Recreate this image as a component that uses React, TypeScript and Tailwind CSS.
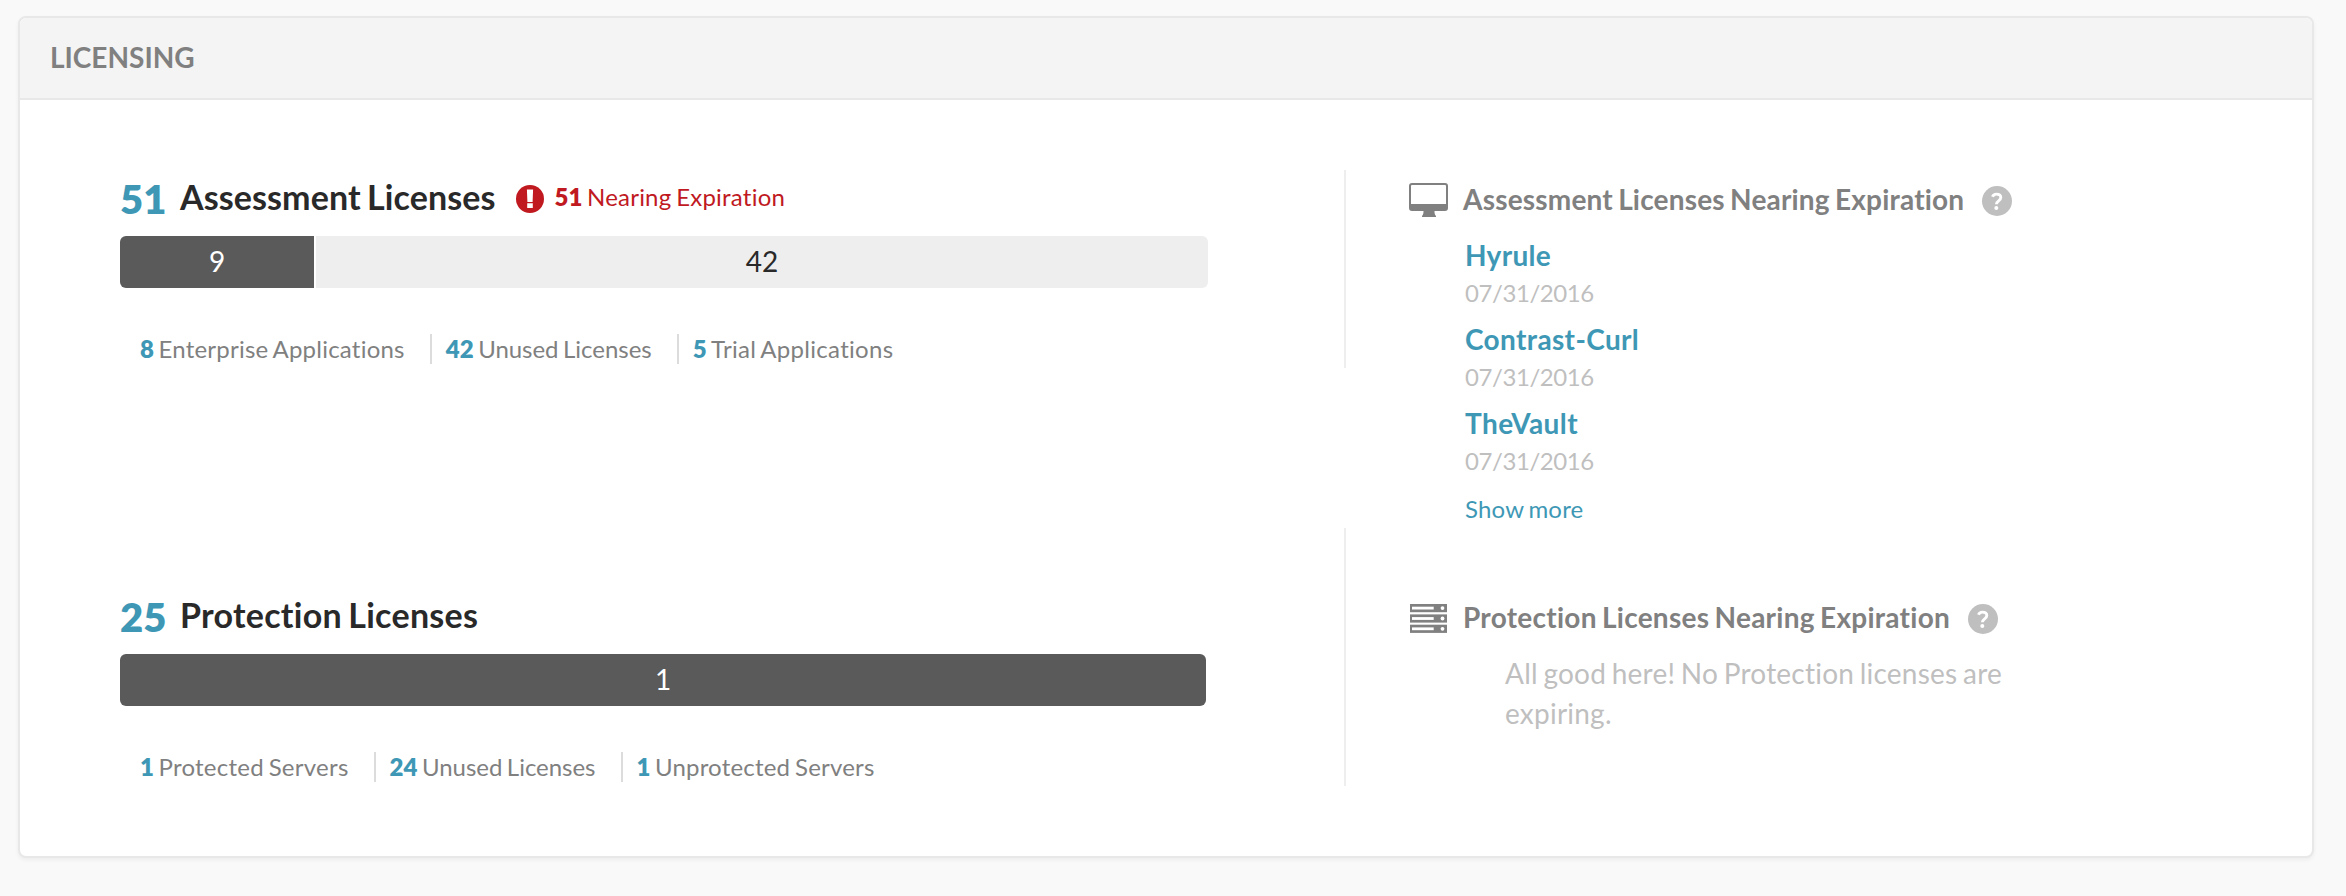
import { Fragment, type ReactNode } from "react";

const Help = () => (
  <svg viewBox="0 0 30 30" className="mt-0.5 size-[30px] shrink-0">
    <circle cx="15" cy="15" r="15" fill="#bfbfbf" />
    <path d="M10.500 10.700C11.200 8.700 12.700 8.100 14.400 8.100c2.500 0 4.400 1.300 4.400 3.400 0 3.300-4.400 3.300-4.400 6.700" fill="none" stroke="#fff" strokeWidth="2.900" />
    <circle cx="14.300" cy="21.900" r="2" fill="#fff" />
  </svg>
);

const Alert = () => (
  <svg viewBox="0 0 28 28" className="size-7 shrink-0">
    <circle cx="14" cy="14" r="14" fill="#c0191f" />
    <path d="M10.900 4.500h6.200l-.5 12.500h-5.200zM11.200 18.300h5.600v4.600h-5.600z" fill="#fff" />
  </svg>
);

const Monitor = () => (
  <svg viewBox="0 0 40 34" className="h-[34px] w-10">
    <path
      fillRule="evenodd"
      fill="#808080"
      d="M3 0h33a3 3 0 0 1 3 3v22a3 3 0 0 1-3 3H25.500c0 2.500.3 3.600 1.500 5v1H13v-1c1.200-1.400 1.500-2.500 1.500-5H3a3 3 0 0 1-3-3V3a3 3 0 0 1 3-3zM3 2a1 1 0 0 0-1 1v18h35V3a1 1 0 0 0-1-1z"
    />
  </svg>
);

const Servers = () => (
  <svg viewBox="0 0 37 29" className="ml-px h-[29px] w-[37px]">
    {[0, 10.4, 20.7].map((y) => (
      <g key={y}>
        <rect y={y} width="37" height="8.200" fill="#808080" />
        <rect x="2" y={y + 2.700} width="21.700" height="2.800" fill="#fff" />
        <circle cx="32.500" cy={y + 4.100} r="1.900" fill="#fff" />
      </g>
    ))}
  </svg>
);

type Stat = { value: number; label: string; tracking: string };

const Stats = ({ items }: { items: Stat[] }) => (
  <div className="mt-[46px] ml-5 flex h-[30px] items-center text-2xl leading-[30px] text-[#808080] [word-spacing:-1.6px]">
    {items.map((s, i) => (
      <Fragment key={s.label}>
        {i > 0 && <span className="mr-[13.5px] ml-[25.5px] h-[30px] w-0.5 bg-[#dcdcdc]" />}
        <span className="whitespace-nowrap">
          <b className="font-extrabold text-[#3e98b5]">{s.value}</b> <span className={s.tracking}>{s.label}</span>
        </span>
      </Fragment>
    ))}
  </div>
);

const Title = ({ count, tracking, children }: { count: number; tracking: string; children: ReactNode }) => (
  <div className="flex h-[50px] items-baseline pt-1">
    <span className="text-[40px] leading-[50px] font-extrabold text-[#3e98b5]">{count}</span>
    <h2 className={`relative -top-1 ml-[13.5px] text-[34px] leading-[50px] font-bold text-[#292929] [word-spacing:-2.2px] ${tracking}`}>{children}</h2>
  </div>
);

const SideTitle = ({ icon, tracking, children }: { icon: ReactNode; tracking: string; children: ReactNode }) => (
  <div className="flex h-10 items-center">
    <span className="flex w-[54px] items-center">{icon}</span>
    <h3 className={`mr-[18px] pb-0.5 text-[28px] leading-10 font-bold text-[#808080] [word-spacing:-1.8px] ${tracking}`}>{children}</h3>
    <Help />
  </div>
);

const apps = [
  { name: "Hyrule", tracking: "tracking-[0.3px]" },
  { name: "Contrast-Curl", tracking: "tracking-[0.36px]" },
  { name: "TheVault", tracking: "tracking-[0.4px]" },
];

export default function App() {
  return (
    <div className="h-[896px] w-[2346px] bg-[#f9f9f9] pt-4 pl-[18px] font-['Lato',sans-serif] [font-variant-ligatures:none]">
      <section className="h-[842px] w-[2296px] overflow-hidden rounded-lg border-2 border-[#e8e8e8] bg-white shadow-[0_2px_4px_rgba(0,0,0,0.05)]">
        <header className="flex h-[82px] items-center border-b-2 border-[#e8e8e8] bg-[#f4f4f4] pl-[30px]">
          <h1 className="pb-0.5 text-[28px] leading-10 font-bold text-[#808080]">LICENSING</h1>
        </header>

        <div className="flex h-[428px] pt-[70px] pl-[100px]">
          <div className="w-[1224px]">
            <div className="flex h-[66px] items-start">
              <Title count={51} tracking="tracking-[0.11px]">Assessment Licenses</Title>
              <div className="mt-[15px] ml-5 flex items-center text-2xl leading-7 text-[#c0191f] [word-spacing:-1.6px]">
                <Alert />
                <span className="-mt-1 ml-[11px]">
                  <b className="font-extrabold">51</b> <span className="tracking-[0.22px]">Nearing Expiration</span>
                </span>
              </div>
            </div>
            <div className="flex h-[52px] w-[1088px] gap-0.5 overflow-hidden rounded-md text-[28px]">
              <div className="flex w-[194px] items-center justify-center bg-[#5a5a5a] pb-0.5 text-white">9</div>
              <div className="flex flex-1 items-center justify-center bg-[#eeeeee] pb-0.5 text-[#292929]">42</div>
            </div>
            <Stats
              items={[
                { value: 8, label: "Enterprise Applications", tracking: "tracking-[0.23px]" },
                { value: 42, label: "Unused Licenses", tracking: "tracking-[-0.03px]" },
                { value: 5, label: "Trial Applications", tracking: "tracking-[0.3px]" },
              ]}
            />
          </div>
          <div className="h-[198px] w-0.5 bg-[#eeeeee]" />
          <div className="ml-[63px] pt-[10px]">
            <SideTitle icon={<Monitor />} tracking="tracking-[0.19px]">Assessment Licenses Nearing Expiration</SideTitle>
            <ul className="mt-[15px] ml-14">
              {apps.map(({ name, tracking }) => (
                <li key={name} className="h-[84px]">
                  <a className={`block text-[28px] leading-10 font-bold text-[#3e98b5] ${tracking}`}>{name}</a>
                  <p className="text-2xl leading-9 tracking-[-0.42px] text-[#bfbfbf]">07/31/2016</p>
                </li>
              ))}
            </ul>
            <a className="mt-1 ml-14 block text-2xl leading-9 tracking-[0.18px] text-[#3e98b5] [word-spacing:-1.6px]">Show more</a>
          </div>
        </div>

        <div className="flex h-[328px] pl-[100px]">
          <div className="w-[1224px] pt-[60px]">
            <div className="h-[66px]">
              <Title count={25} tracking="tracking-[0.28px]">Protection Licenses</Title>
            </div>
            <div className="flex h-[52px] w-[1086px] items-center justify-center rounded-md bg-[#5a5a5a] pb-0.5 text-[28px] text-white">1</div>
            <Stats
              items={[
                { value: 1, label: "Protected Servers", tracking: "tracking-[0.25px]" },
                { value: 24, label: "Unused Licenses", tracking: "tracking-[-0.03px]" },
                { value: 1, label: "Unprotected Servers", tracking: "tracking-[0.2px]" },
              ]}
            />
          </div>
          <div className="h-[258px] w-0.5 bg-[#eeeeee]" />
          <div className="ml-[63px] pt-[70px]">
            <SideTitle icon={<Servers />} tracking="tracking-[0.26px]">Protection Licenses Nearing Expiration</SideTitle>
            <p className="mt-[15px] ml-24 w-[520px] text-[28px] leading-10 tracking-[0.23px] text-[#bfbfbf] [word-spacing:-1.8px]">
              All good here! No Protection licenses are expiring.
            </p>
          </div>
        </div>
      </section>
    </div>
  );
}
